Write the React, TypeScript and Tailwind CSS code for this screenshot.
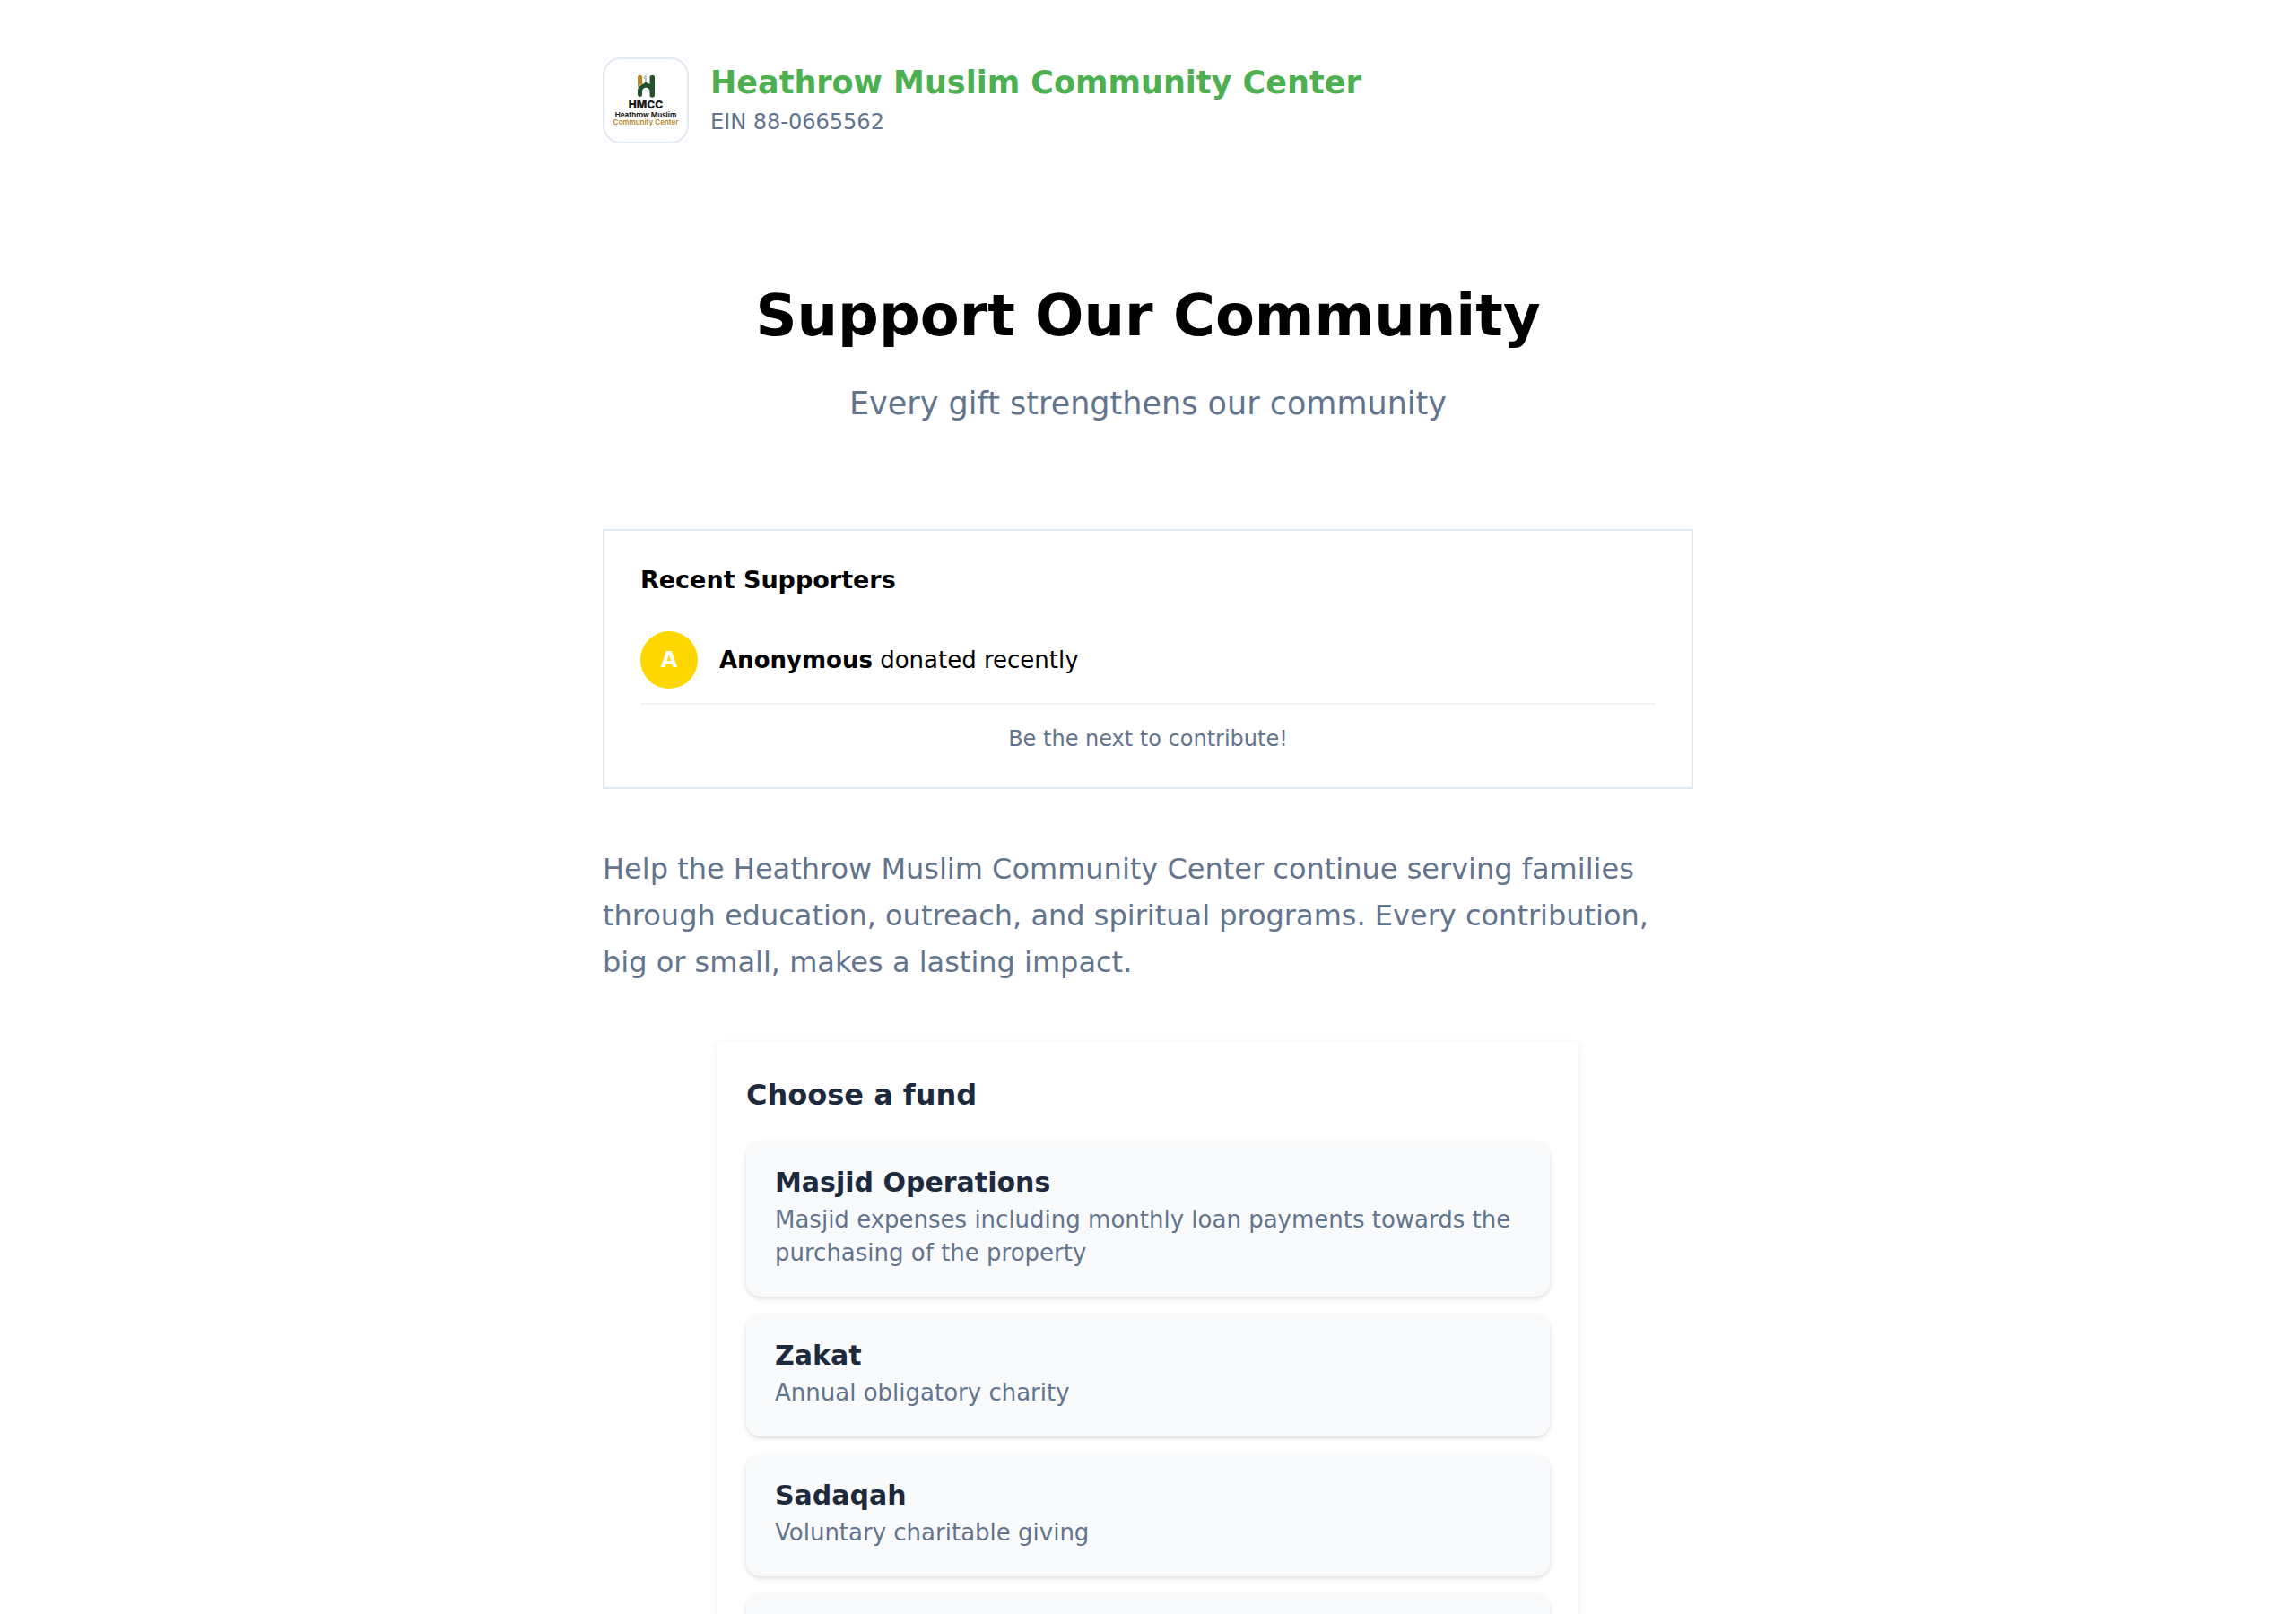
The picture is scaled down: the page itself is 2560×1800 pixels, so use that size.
interface Fund {
	id: string
	name: string
	description: string
}

interface FundCardProps {
	fund: Fund
}

const funds: Fund[] = [
	{
		id: 'operations',
		name: 'Masjid Operations',
		description:
			'Masjid expenses including monthly loan payments towards the purchasing of the property',
	},
	{ id: 'zakat', name: 'Zakat', description: 'Annual obligatory charity' },
	{ id: 'sadaqah', name: 'Sadaqah', description: 'Voluntary charitable giving' },
]

function Logo() {
	return (
		<div className="size-24 shrink-0 overflow-hidden rounded-[20px] border-2 border-slate-200 bg-white">
			<svg viewBox="0 0 92 92" className="size-full" role="img" aria-label="HMCC logo">
				<path d="M37 20.300a2.600 2.600 0 0 1 5.200 0v7.200c-2.200.8-4 2-5.200 4z" fill="#b8862f" />
				<path
					d="M50.500 20.500a2.750 2.750 0 0 1 5.500 0v19.500a2.750 2.750 0 0 1-5.500 0v-4a4.200 4.200 0 0 0-8.400 0v4a2.600 2.600 0 0 1-5.100 0v-4.500c0-4 2.500-6.500 5.700-7.700 1.700-.7 2.800-1.500 3.300-3 .6 1.500 2.300 2.700 4.500 2.900z"
					fill="#24522d"
				/>
				<path
					d="M46.800 19.300a1.500 1.500 0 1 0 0 2.400M46 22.500v3"
					fill="none"
					stroke="#24522d"
					strokeWidth="0.700"
				/>
				<g textAnchor="middle" fontFamily="Inter, sans-serif">
					<text x="46" y="55" fontSize="12" fontWeight="900" fill="#1c1c1c">
						HMCC
					</text>
					<text x="46" y="65" fontSize="8" fontWeight="700" fill="#1c1c1c">
						Heathrow Muslim
					</text>
					<text x="46" y="73" fontSize="8" fontWeight="600" fill="#b8862f">
						Community Center
					</text>
				</g>
			</svg>
		</div>
	)
}

function FundCard({ fund }: FundCardProps) {
	return (
		<button
			type="button"
			className="block w-full rounded-2xl bg-slate-50 px-8 pt-[27px] pb-[30px] text-left shadow-[0_2px_6px_rgba(0,0,0,0.1),0_2px_4px_-2px_rgba(0,0,0,0.1)]"
		>
			<span className="block text-[30px] leading-[38px] font-bold text-slate-800">
				{fund.name}
			</span>
			<span className="mt-1 block text-[26px] leading-[37px] text-slate-500">
				{fund.description}
			</span>
		</button>
	)
}

export default function App() {
	return (
		<main className="mx-auto min-h-screen max-w-[1280px] px-8 pt-16 font-['DejaVu_Sans',sans-serif]">
			<header className="flex items-center gap-6">
				<Logo />
				<div>
					<p className="text-[35px] leading-[48px] font-bold text-[#4caf50]">
						Heathrow Muslim Community Center
					</p>
					<p className="text-2xl leading-10 text-slate-500">EIN 88-0665562</p>
				</div>
			</header>

			<div className="pt-36 text-center">
				<h1 className="text-[64px] leading-[96px] font-bold text-black">Support Our Community</h1>
				<p className="mt-6 text-[35px] leading-[52px] text-slate-500">
					Every gift strengthens our community
				</p>
			</div>

			<section className="mt-[114px] border-2 border-slate-200 p-10">
				<h2 className="text-[27px] leading-[30px] font-bold text-black">Recent Supporters</h2>
				<div className="mt-[26px] flex items-center gap-6 border-b-2 border-slate-100 py-4">
					<span className="flex size-16 items-center justify-center rounded-full bg-[#ffd700] text-2xl font-bold text-white">
						A
					</span>
					<p className="text-[26px] leading-9 text-black">
						<strong>Anonymous</strong> donated recently
					</p>
				</div>
				<p className="mt-6 text-center text-2xl leading-7 text-slate-500">
					Be the next to contribute!
				</p>
			</section>

			<p className="my-[63px] text-[32px] leading-[52px] text-slate-500">
				Help the Heathrow Muslim Community Center continue serving families through education,
				outreach, and spiritual programs. Every contribution, big or small, makes a lasting impact.
			</p>

			<section className="mx-auto max-w-[960px] p-8 shadow-[0_2px_8px_rgba(0,0,0,0.08)]">
				<h2 className="text-[32px] leading-[54px] font-bold text-slate-800">Choose a fund</h2>
				<div className="mt-[25px] flex flex-col gap-5">
					{funds.map((fund) => (
						<FundCard key={fund.id} fund={fund} />
					))}
					<div className="h-34 rounded-2xl bg-slate-50 shadow-[0_2px_6px_rgba(0,0,0,0.1),0_2px_4px_-2px_rgba(0,0,0,0.1)]" />
				</div>
			</section>
		</main>
	)
}
